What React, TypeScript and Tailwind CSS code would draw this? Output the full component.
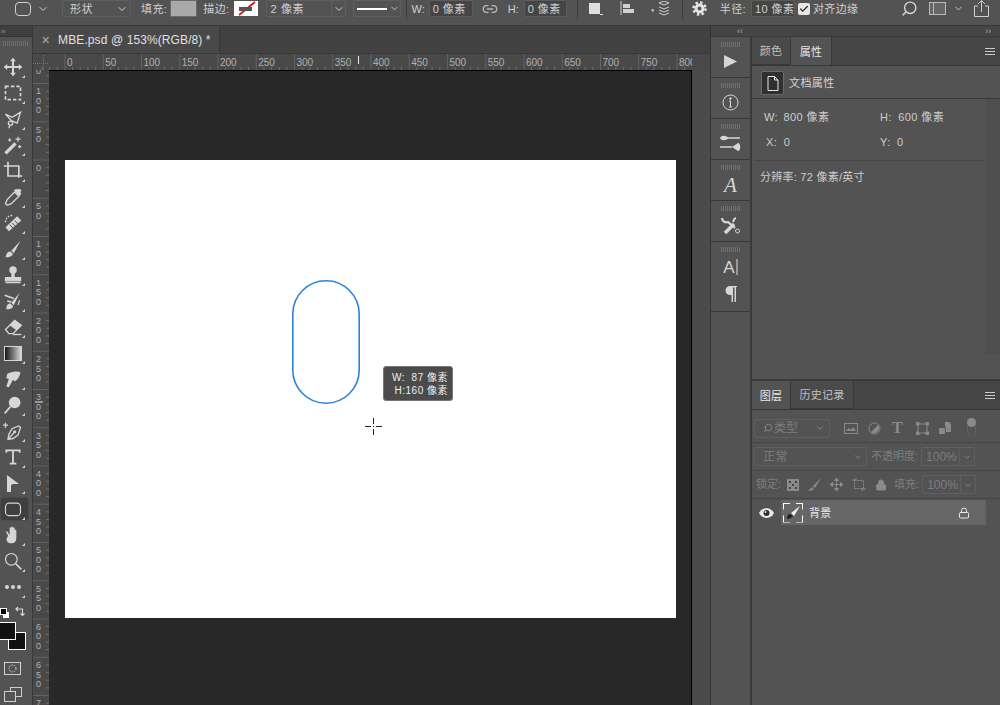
import type { ReactNode } from "react"
import { ChevronDown, Search, Link2, Lock, Check } from "lucide-react"

const C = "#d6d6d6"

function Ico({ children, size = 20, box = 24 }: { children: ReactNode; size?: number; box?: number }) {
  return (
    <svg width={size} height={size} viewBox={`0 0 ${box} ${box}`} fill="none" stroke={C} strokeWidth="1.6">
      {children}
    </svg>
  )
}

const tools: ReactNode[] = [
  <Ico key="move"><path d="M12 2v20M2 12h20" strokeWidth="2.4" /><path d="M12 1l3.5 4h-7zM12 23l3.5-4h-7zM1 12l4-3.5v7zM23 12l-4-3.5v7z" fill={C} stroke="none" /></Ico>,
  <Ico key="marquee"><rect x="3" y="4" width="18" height="16" strokeDasharray="4 2.5" strokeWidth="2" /></Ico>,
  <Ico key="lasso"><path d="M3 6l8 4 10-6-4 13-7-3z" /><circle cx="9" cy="17" r="2.5" /><path d="M8 20l-1 3" /></Ico>,
  <Ico key="wand"><path d="M3 22L15 10" strokeWidth="4" /><path d="M18 2v6M15 5h6M8 4v4M6 6h4M20 12v4M18 14h4" strokeWidth="1.4" /></Ico>,
  <Ico key="crop"><path d="M1 6h18v14M6 1v17h17" strokeWidth="2" /></Ico>,
  <Ico key="dropper"><path d="M14 6l5 5-9 9-5 2-2-2 2-5z" /><path d="M13 4l7 7 2-3-1-1 1-3-2-2-3 1-1-1z" fill={C} stroke="none" /></Ico>,
  <Ico key="heal"><path d="M7 22L22 9l-5-5L3 17z" fill={C} stroke="none" /><path d="M8 14l4 4M11 12l4 4M14 9l4 4" stroke="#535353" strokeWidth="1.2" /><path d="M3 11c0-5 4-8 8-8" strokeDasharray="2 1.5" /></Ico>,
  <Ico key="brush"><path d="M21 2L10 14l3 3z" fill={C} stroke="none" /><path d="M9 15c-4 0-5 3-6 7 4 0 8-1 9-4z" fill={C} stroke="none" /></Ico>,
  <Ico key="stamp"><circle cx="12" cy="6" r="4.5" fill={C} stroke="none" /><path d="M10 9h4v6h-4z" fill={C} stroke="none" /><path d="M3 15h18v4H3zM3 21h18" fill={C} stroke={C} strokeWidth="1.5" /></Ico>,
  <Ico key="mixer"><path d="M20 2L10 14l3 3z" fill={C} stroke="none" /><path d="M9 15c-4 0-5 3-5 7 4 0 8-1 8-4z" fill={C} stroke="none" /><path d="M2 5l11 4M5 12l5 1" strokeWidth="2" /><path d="M20 11l-2 6" strokeWidth="1.4" /></Ico>,
  <Ico key="eraser"><path d="M3 15L14 4l8 6-10 10H7z" /><path d="M14 4l8 6-6 6-8-6z" fill={C} stroke="none" /><path d="M12 21h10" /></Ico>,
  <svg key="grad" width="18" height="15" viewBox="0 0 18 15"><defs><linearGradient id="g"><stop offset="0" stopColor="#111" /><stop offset="1" stopColor="#ddd" /></linearGradient></defs><rect x="0.5" y="0.5" width="17" height="14" fill="url(#g)" stroke="#d6d6d6" /></svg>,
  <Ico key="smudge"><path d="M5 6c4-3 12-4 16-2-1 5-3 9-7 11l-2-2-5 9-3-1 3-9-3-1z" fill={C} stroke="none" /></Ico>,
  <Ico key="dodge"><circle cx="14" cy="9" r="7" fill={C} stroke="none" /><path d="M9 14l-7 8" strokeWidth="2" /></Ico>,
  <Ico key="pen"><path d="M11 9l8-3 2 2-3 9-6 4-6 1 1-6z" /><path d="M7 21l7-8" /><circle cx="14" cy="13" r="1" fill={C} /><path d="M3 2v6M0 5h6" /></Ico>,
  <Ico key="type"><path d="M4 7V4h16v3M12 4v16M8 20h8" strokeWidth="2.2" /></Ico>,
  <svg key="path" width="16" height="18" viewBox="0 0 16 18"><path d="M2 1l12 9H8l-2 1v7H2z" fill="#d6d6d6" /></svg>,
  <Ico key="rect"><rect x="3" y="5" width="18" height="15" rx="4.5" strokeWidth="1.4" /></Ico>,
  <Ico key="hand"><path d="M6 13L4 9c-1-2 1-2 2 0l2 3V4c0-1.6 2-1.6 2 0v6-7c0-1.6 2-1.6 2 0v7-6c0-1.6 2-1.6 2 0v7-4c0-1.6 2-1.6 2 0v8c0 5-2 7-6 7s-5-2-6-5z" fill={C} stroke="none" /></Ico>,
  <Ico key="zoom"><circle cx="10" cy="10" r="7" strokeWidth="1.4" /><path d="M15 15l7 7" strokeWidth="2" /></Ico>,
  <svg key="dots" width="16" height="4" viewBox="0 0 16 4"><circle cx="2" cy="2" r="2" fill="#d6d6d6" /><circle cx="8" cy="2" r="2" fill="#d6d6d6" /><circle cx="14" cy="2" r="2" fill="#d6d6d6" /></svg>,
]

function Toolbar() {
  return (
    <div className="w-[32px] shrink-0 flex flex-col bg-[#535353] relative overflow-hidden">
      <div className="h-[11px] shrink-0 bg-[#3f3f3f] border-b border-[#333] flex items-center pl-px">
        <span className="text-[7px] leading-none text-[#aaa]">››</span>
      </div>
      <div className="h-[5px] shrink-0 mt-[4px] mx-[3px] bg-[repeating-linear-gradient(90deg,#6d6d6d_0,#6d6d6d_1px,transparent_1px,transparent_2px)]"></div>
      <div className="h-[8px] shrink-0"></div>
      {tools.map((t, i) => (
        <div key={i} className="h-[26px] shrink-0 relative flex items-center justify-center">
          {i === 17 && <div className="absolute left-0 right-[3px] top-[1px] bottom-[1px] bg-[#3f3f3f] rounded-sm border border-[#4a4a4a]"></div>}
          <div className="relative -translate-x-[3px] flex items-center justify-center">{t}</div>
          <div className="absolute right-[7px] bottom-[2px] w-0 h-0 border-l-[3px] border-l-transparent border-b-[3px] border-b-[#d0d0d0]"></div>
        </div>
      ))}
      <div className="relative h-[55px] shrink-0">
        <div className="absolute left-[3px] top-[12px] w-[6px] h-[6px] bg-white"></div>
        <div className="absolute left-0 top-[8px] w-[7px] h-[7px] bg-black border border-white"></div>
        <div className="absolute left-[15px] top-[6px]">
          <svg width="11" height="11" viewBox="0 0 11 11" fill="none" stroke="#d6d6d6" strokeWidth="1.2"><path d="M1 3h6.5v6.5M3 1L1 3l2 2M5.5 7.5l2 2 2-2" /></svg>
        </div>
        <div className="absolute left-[8px] top-[32px] w-[18px] h-[18px] bg-[#111] border border-white"></div>
        <div className="absolute left-[-2px] top-[22px] w-[18px] h-[18px] bg-[#111] border border-white"></div>
      </div>
      <div className="h-[26px] shrink-0 flex items-center pl-[4px]">
        <svg width="17" height="13" viewBox="0 0 17 13"><rect x="0.5" y="0.5" width="16" height="12" fill="none" stroke="#d0d0d0" /><circle cx="8.5" cy="6.5" r="3.5" fill="none" stroke="#d0d0d0" strokeDasharray="1.5 1" /></svg>
      </div>
      <div className="h-[26px] shrink-0 flex items-center pl-[4px] relative">
        <svg width="18" height="15" viewBox="0 0 18 15" fill="none" stroke="#d0d0d0"><rect x="6.5" y="0.5" width="11" height="9" /><rect x="0.5" y="4.5" width="11" height="10" fill="#535353" /></svg>
      </div>
    </div>
  )
}

function HRuler() {
  const majors = Array.from({ length: 17 }, (_, i) => i)
  return (
    <svg width="660" height="16" viewBox="0 0 660 16" className="block">
      <rect width="660" height="16" fill="#494949" />
      {Array.from({ length: 90 }, (_, i) => {
        const x = 32 + 7.65 * (i - 3)
        const major = (i - 3) % 5 === 0
        return <line key={i} x1={x} x2={x} y1={major ? 0 : 13} y2={16} stroke={major ? "#626262" : "#6f6f6f"} />
      })}
      <path d="M0 9.500h15M10.500 1v15" stroke="#777" strokeDasharray="1 1" />
      {majors.map((i) => (
        <text key={i} x={34 + 38.25 * i} y={12} fontSize="10" fill="#b0b0b0" fontFamily="Liberation Sans">
          {i * 50}
        </text>
      ))}
      <line x1="325.5" x2="325.5" y1="2" y2="10" stroke="#e8e8e8" />
    </svg>
  )
}

function VRuler() {
  const vals = [100, 50, 0, 50, 100, 150, 200, 250, 300, 350, 400, 450, 500, 550, 600, 650, 700]
  return (
    <svg width="16" height="635" viewBox="0 0 16 635" className="block shrink-0">
      <rect width="16" height="635" fill="#494949" />
      {Array.from({ length: 90 }, (_, i) => {
        const y = 90 + 7.65 * (i - 15)
        const major = (i - 15) % 5 === 0
        return <line key={i} y1={y} y2={y} x1={major ? 0 : 13} x2={16} stroke={major ? "#626262" : "#6f6f6f"} />
      })}
      <text x="3" y="4" fontSize="9" fill="#b0b0b0" fontFamily="Liberation Sans">0</text>
      {vals.map((v, i) =>
        String(v).split("").map((d, j) => (
          <text key={`${i}${j}`} x="3" y={24.4 + 38.25 * i + j * 9.5} fontSize="9" fill="#b0b0b0" fontFamily="Liberation Sans">
            {d}
          </text>
        ))
      )}
      <line x1="2" x2="10" y1="332" y2="332" stroke="#e8e8e8" />
    </svg>
  )
}

function Canvas() {
  return (
    <div className="w-[643px] h-[635px] bg-[#282828] border-t border-r border-black shrink-0 pt-[89px] pl-[16px] overflow-hidden">
      <div className="relative w-[611px] h-[458px] bg-white">
        <svg width="68" height="124" viewBox="0 0 68 124" fill="none" className="absolute left-[227px] top-[120px]">
          <rect x="0.8" y="0.8" width="66.400" height="122.400" rx="33.200" stroke="#2c83d8" strokeWidth="1.600" />
        </svg>
        <div className="absolute left-[318px] top-[206px] w-[70px] h-[35px] bg-[#4b4b4b] rounded-[3px] border border-[#777] text-[10px] leading-[13px] text-[#eee] flex flex-col justify-center items-end pr-[4px]">
          <span className="tracking-[0.5px]">W:&nbsp; 87 像素</span>
          <span className="tracking-[0.5px]">H:160 像素</span>
        </div>
        <div className="absolute left-[300px] top-[258px]">
          <svg width="17" height="17" viewBox="0 0 17 17" stroke="#222"><path d="M8.5 0v6M8.5 11v6M0 8.5h6M11 8.5h6M8 8.5h1" /></svg>
        </div>
      </div>
    </div>
  )
}

function Label({ children, className = "" }: { children: ReactNode; className?: string }) {
  return <span className={`text-[11px] leading-none text-[#d0d0d0] whitespace-nowrap pt-px ${className}`}>{children}</span>
}

function OptionsBar() {
  const box = "h-[17px] border border-[#5f5f5f] rounded-[2px] flex items-center shrink-0"
  const field = "h-[17px] bg-[#454545] border border-[#5c5c5c] rounded-[1px] text-[11px] text-[#d0d0d0] flex items-center shrink-0 tracking-[0.4px] whitespace-nowrap overflow-hidden pt-px"
  return (
    <div className="h-[26px] border-b border-[#383838] bg-[#535353] flex items-start shrink-0 relative overflow-hidden">
      <div className="flex items-center h-[17px] pl-[15px]">
        <div className="w-[16px] h-[14px] rounded-[4px] border border-[#cfcfcf]"></div>
        <ChevronDown size={12} color="#cfcfcf" className="ml-[6px]" />
        <div className={`${box} w-[69px] ml-[13px] justify-between pl-[7px] pr-[2px]`}>
          <Label className="tracking-[0.5px]">形状</Label>
          <ChevronDown size={12} color="#cfcfcf" />
        </div>
        <Label className="ml-[10px] tracking-[0.4px]">填充:</Label>
        <div className="w-[27px] h-[17px] bg-[#a9a9a9] border border-[#6a6a6a] ml-[3px] shrink-0"></div>
        <Label className="ml-[6px] tracking-[0.4px]">描边:</Label>
        <div className="ml-[4px] w-[24px] h-[15px] bg-white shrink-0 flex items-center justify-center">
          <svg width="24" height="15" viewBox="0 0 24 15"><path d="M5 14L21 1" stroke="#d8141a" strokeWidth="1.8" /><rect x="5" y="6" width="13" height="4" fill="#555" /></svg>
        </div>
        <div className={`${box} w-[80px] ml-[8px]`}>
          <div className="w-[66px] pl-[4px] text-[11px] text-[#d0d0d0] tracking-[0.6px] border-r border-[#5f5f5f] h-full flex items-center pt-px">2 像素</div>
          <ChevronDown size={12} color="#cfcfcf" className="ml-px" />
        </div>
        <div className={`${box} w-[48px] ml-[7px] pl-[3px]`}>
          <div className="w-[30px] h-[2px] bg-white"></div>
          <ChevronDown size={11} color="#cfcfcf" className="ml-[2px]" />
        </div>
        <div className="w-px h-[20px] bg-[#3c3c3c] ml-[5px] shrink-0"></div>
        <Label className="ml-[5px] text-[#b5b5b5]">W:</Label>
        <div className={`${field} w-[44px] ml-[4px] pl-[3px]`}>0 像素</div>
        <Link2 size={16} color="#b8b8b8" className="ml-[9px] shrink-0" />
        <Label className="ml-[10px] text-[#b5b5b5]">H:</Label>
        <div className={`${field} w-[43px] ml-[5px] pl-[3px]`}>0 像素</div>
        <div className="w-px h-[20px] bg-[#3c3c3c] ml-[10px] shrink-0"></div>
        <div className="relative ml-[11px] w-[11px] h-[11px] bg-[#e0e0e0] shrink-0">
          <div className="absolute left-[11px] top-[11px] w-[3px] h-px bg-[#ddd]"></div>
        </div>
        <svg width="16" height="15" viewBox="0 0 16 15" className="ml-[20px] shrink-0">
          <path d="M1 0v14" stroke="#d0d0d0" /><rect x="3" y="3" width="7" height="4" fill="#d0d0d0" /><rect x="3" y="8" width="11" height="4" fill="#d0d0d0" />
        </svg>
        <svg width="20" height="16" viewBox="0 0 20 16" fill="none" stroke="#d0d0d0" className="ml-[14px] shrink-0">
          <path d="M1 9h3M3 8v3" /><path d="M9 2l5-2 5 2-5 2zM9 6l5 2 5-2M9 9l5 2 5-2M9 12l5 2 5-2" />
        </svg>
        <div className="w-px h-[20px] bg-[#3c3c3c] ml-[12px] shrink-0"></div>
        <svg width="15" height="15" viewBox="0 0 15 15" fill="none" stroke="#e4e4e4" className="ml-[9px] shrink-0">
          <circle cx="7.500" cy="7.500" r="3.500" strokeWidth="3" />
          <circle cx="7.500" cy="7.500" r="6" strokeWidth="2.600" strokeDasharray="2.400 2.300" />
        </svg>
        <Label className="ml-[13px] text-[#c0c0c0] tracking-[0.4px]">半径:</Label>
        <div className={`${field} w-[44px] ml-[5px] pl-[3px]`}>10 像素</div>
        <div className="ml-[3px] w-[12px] h-[12px] bg-[#e6e6e6] rounded-[2px] flex items-center justify-center shrink-0">
          <Check size={10} color="#222" strokeWidth={3} />
        </div>
        <Label className="ml-[3px] tracking-[0.3px]">对齐边缘</Label>
        <Search size={17} color="#d6d6d6" className="ml-[43px] shrink-0 -scale-x-100" />
        <div className="ml-[11px] w-[17px] h-[13px] border border-[#bbb] bg-[#666] shrink-0 flex">
          <div className="w-[4px] border-r border-[#bbb]"></div>
        </div>
        <ChevronDown size={11} color="#cfcfcf" className="ml-[7px] shrink-0" />
        <svg width="17" height="18" viewBox="0 0 17 18" fill="none" stroke="#d0d0d0" className="ml-[9px] shrink-0">
          <path d="M5 6H1.5v10.5h14V6H12M8.5 12V1M5 4l3.5-3.5L12 4" />
        </svg>
      </div>
    </div>
  )
}

function Handle() {
  return <div className="h-[5px] shrink-0 w-[20px] mx-auto mt-[5px] bg-[repeating-linear-gradient(90deg,#6f6f6f_0,#6f6f6f_1px,transparent_1px,transparent_2px)]"></div>
}

function Dock() {
  const block = "border-b border-[#383838] shrink-0 flex flex-col"
  return (
    <div className="w-[39px] bg-[#535353] flex flex-col shrink-0">
      <div className={`${block} h-[41px]`}>
        <Handle />
        <div className="flex-1 flex items-center justify-center pb-[1px]"><svg width="15" height="15" viewBox="0 0 15 15"><path d="M1 1l13 6.5L1 14z" fill="#d6d6d6" /></svg></div>
      </div>
      <div className={`${block} h-[41px]`}>
        <Handle />
        <div className="flex-1 flex items-center justify-center pb-[2px]">
          <svg width="17" height="17" viewBox="0 0 17 17" fill="none" stroke="#d6d6d6"><circle cx="8.5" cy="8.5" r="7.5" /><path d="M8.5 7v6M7 13h3M7 7h2" /><circle cx="8.5" cy="4.5" r="0.8" fill="#d6d6d6" /></svg>
        </div>
      </div>
      <div className={`${block} h-[41px]`}>
        <Handle />
        <div className="flex-1 flex items-center justify-center pb-[2px]">
          <svg width="21" height="16" viewBox="0 0 21 16"><path d="M6 3h14M0 12h12" stroke="#d6d6d6" strokeWidth="1.5" /><path d="M0 3c1-3 7-3 8 0-1 3-7 3-8 0zM12 12l6-4c3 0 3 8 0 8z" fill="#d6d6d6" /></svg>
        </div>
      </div>
      <div className={`${block} h-[41px]`}>
        <Handle />
        <div className="flex-1 flex items-center justify-center text-[21px] leading-none italic text-[#d6d6d6] font-['Liberation_Serif',serif]">A</div>
      </div>
      <div className={`${block} h-[41px]`}>
        <Handle />
        <div className="flex-1 flex items-center justify-center">
          <svg width="20" height="18" viewBox="0 0 20 18" fill="none" stroke="#d6d6d6"><path d="M1 1c0 3 3 5 6 4l7 6" strokeWidth="2.2" /><path d="M12 5c1-2 0-3 3-4" strokeWidth="2" /><circle cx="16.5" cy="14" r="2" /><path d="M13 7l-9 9" strokeWidth="3.5" /></svg>
        </div>
      </div>
      <div className={`${block} h-[70px]`}>
        <Handle />
        <div className="flex items-center justify-center mt-[3px] h-[24px]">
          <span className="text-[17px] leading-none text-[#d6d6d6]">A</span><span className="w-[2px] h-[16px] bg-[#999] ml-px"></span>
        </div>
        <div className="flex items-center justify-center mt-[7px]">
          <svg width="13" height="16" viewBox="0 0 13 16"><path d="M6 0h7v1H12v15h-1.500V1.500H9V16H7.500V9H6A4.500 4.500 0 0 1 6 0z" fill="#d6d6d6" /></svg>
        </div>
      </div>
    </div>
  )
}

function Tab({ children, active, w }: { children: ReactNode; active?: boolean; w: string }) {
  return (
    <div className={`${w} h-full flex items-center justify-center pt-[2px] text-[11px] tracking-[0.3px] border-r border-[#383838] ${active ? "bg-[#535353] text-[#e8e8e8]" : "bg-[#4a4a4a] text-[#c0c0c0] border-b"}`}>
      {children}
    </div>
  )
}

function MenuIcon() {
  return <div className="ml-auto mr-[5px] w-[10px] h-[7px] border-y border-[#ccc] relative"><div className="absolute top-[2px] inset-x-0 h-px bg-[#ccc]"></div></div>
}

function Properties() {
  return (
    <div className="h-[344px] flex flex-col bg-[#535353] border-b-[2px] border-[#3a3a3a] shrink-0">
      <div className="h-[29px] flex items-center bg-[#454545] border-b border-[#383838] shrink-0">
        <Tab w="w-[39px]">颜色</Tab>
        <Tab w="w-[41px]" active>属性</Tab>
        <MenuIcon />
      </div>
      <div className="h-[33px] border-b border-[#3a3a3a] flex items-center pl-[9px] pt-[2px] shrink-0 text-[11px] text-[#d6d6d6]">
        <div className="w-[23px] h-[24px] bg-[#2f2f2f] border border-[#6a6a6a] rounded-[2px] flex items-center justify-center">
          <svg width="12" height="15" viewBox="0 0 12 15" fill="none" stroke="#e6e6e6"><path d="M1 .5h6.500L11 4v10.500H1zM7.500 .5V4H11" /></svg>
        </div>
        <span className="ml-[5px] tracking-[0.4px]">文档属性</span>
      </div>
      <div className="flex flex-1 min-h-0">
        <div className="w-[234px] shrink-0 flex flex-col text-[11px] text-[#cdcdcd]">
          <div className="flex pt-[11px] h-[36px] leading-[14px]">
            <span className="w-[117px] pl-[12px] tracking-[0.4px]">W: <span className="ml-[2px]">800 像素</span></span>
            <span className="pl-[11px] tracking-[0.4px]">H: <span className="ml-[3px]">600 像素</span></span>
          </div>
          <div className="flex h-[25px] leading-[14px]">
            <span className="w-[117px] pl-[14px] tracking-[0.4px]">X: <span className="ml-[3px]">0</span></span>
            <span className="pl-[11px] tracking-[0.4px]">Y: <span className="ml-[3px]">0</span></span>
          </div>
          <div className="mx-[3px] border-t border-[#474747]"></div>
          <div className="pl-[8px] mt-[9px] leading-[14px] tracking-[0.25px]">分辨率: 72 像素/英寸</div>
        </div>
        <div className="w-[14px] ml-auto h-[255px] bg-[#4e4e4e]"></div>
      </div>
    </div>
  )
}

function Layers() {
  const sel = "h-[19px] border border-[#5f5f5f] rounded-[2px] flex items-center text-[12px] text-[#7d7d7d] shrink-0"
  const fade = "#8a8a8a"
  const line = <div className="border-t border-[#454545] shrink-0"></div>
  return (
    <div className="flex-1 flex flex-col bg-[#535353] min-h-0">
      <div className="h-[29px] flex items-center bg-[#454545] border-b border-[#383838] shrink-0">
        <Tab w="w-[39px]" active>图层</Tab>
        <Tab w="w-[63px]">历史记录</Tab>
        <MenuIcon />
      </div>
      <div className="h-[32px] flex items-center pl-[2px] pt-[4px] shrink-0">
        <div className={`${sel} w-[76px] pl-[8px]`}>
          <Search size={10} color={fade} className="-scale-x-100" />
          <span className="ml-px">类型</span>
          <ChevronDown size={10} color={fade} className="ml-auto mr-[4px]" />
        </div>
        <svg width="14" height="11" viewBox="0 0 14 11" fill="none" stroke={fade} className="ml-[14px]"><rect x="0.5" y="0.5" width="13" height="10" /><path d="M2 8l3-3 2 2 2-3 3 4z" fill={fade} stroke="none" /></svg>
        <svg width="13" height="13" viewBox="0 0 13 13" className="ml-[10px]"><circle cx="6.500" cy="6.500" r="5.500" fill="none" stroke={fade} /><path d="M10 3L3 10a5 5 0 0 0 7-7z" fill={fade} /></svg>
        <span className="ml-[11px] text-[16px] leading-none font-bold text-[#8a8a8a] font-['Liberation_Serif',serif]">T</span>
        <svg width="13" height="13" viewBox="0 0 13 13" fill="none" stroke={fade} className="ml-[13px]"><rect x="2" y="2" width="9" height="9" /><path d="M0 0h3v3H0zM10 0h3v3h-3zM0 10h3v3H0zM10 10h3v3h-3z" fill={fade} /></svg>
        <svg width="12" height="12" viewBox="0 0 12 12" className="ml-[10px]"><path d="M6 0h4l2 2v8H7V5H6zM0 6h6v6H0z" fill={fade} /></svg>
        <div className="ml-[16px] relative w-[9px] h-[18px] rounded-full border border-[#606060]">
          <div className="absolute -top-[2px] -left-[1px] w-[9px] h-[9px] rounded-full bg-[#8a8a8a]"></div>
        </div>
      </div>
      {line}
      <div className="h-[27px] flex items-center pl-[2px] shrink-0">
        <div className={`${sel} w-[113px] pl-[8px] tracking-[0.4px]`}>
          <span>正常</span>
          <ChevronDown size={10} color={fade} className="ml-auto mr-[3px]" />
        </div>
        <span className="ml-[4px] text-[11px] text-[#7d7d7d]">不透明度:</span>
        <div className={`${sel} w-[54px] ml-[3px] pl-[4px] text-[11px]`}>
          100%
          <div className="ml-auto w-[15px] h-full border-l border-[#5f5f5f] flex items-center justify-center"><ChevronDown size={10} color={fade} /></div>
        </div>
      </div>
      {line}
      <div className="h-[27px] flex items-center pl-[4px] shrink-0">
        <span className="text-[11px] text-[#7d7d7d]">锁定:</span>
        <svg width="12" height="12" viewBox="0 0 12 12" className="ml-[6px]"><rect width="12" height="12" fill="#8a8a8a" /><path d="M2 2h2v2H2zM8 2h2v2H8zM5 5h2v2H5zM2 8h2v2H2zM8 8h2v2H8z" fill="#444" /></svg>
        <svg width="13" height="13" viewBox="0 0 13 13" className="ml-[9px]"><path d="M13 0L5 8l2 2zM4 9l-4 4c3 0 5-1 6-2z" fill={fade} /></svg>
        <svg width="13" height="13" viewBox="0 0 13 13" fill="none" stroke={fade} className="ml-[9px]"><path d="M6.500 0v13M0 6.500h13" /><path d="M6.500 0l2 2.500h-4zM6.500 13l2-2.500h-4zM0 6.500l2.500-2v4zM13 6.500l-2.500-2v4z" fill={fade} /></svg>
        <svg width="14" height="13" viewBox="0 0 14 13" fill="none" stroke={fade} className="ml-[9px]"><rect x="2.500" y="2.500" width="9" height="8" strokeDasharray="2 1" /><path d="M0 2h4V0M10 13v-2h4" /></svg>
        <Lock size={12} color={fade} fill={fade} className="ml-[9px]" />
        <span className="ml-[7px] text-[11px] text-[#7d7d7d]">填充:</span>
        <div className={`${sel} w-[54px] ml-[3px] pl-[4px] text-[11px]`}>
          100%
          <div className="ml-auto w-[15px] h-full border-l border-[#5f5f5f] flex items-center justify-center"><ChevronDown size={10} color={fade} /></div>
        </div>
      </div>
      {line}
      <div className="flex mt-[1px] h-[25px] shrink-0">
        <div className="w-[29px] flex items-center justify-center">
          <svg width="15" height="10" viewBox="0 0 15 10"><path d="M0 5c3-6.500 12-6.500 15 0-3 6.500-12 6.500-15 0z" fill="#ececec" /><circle cx="7.500" cy="5" r="3" fill="#2e2e2e" /><circle cx="6.500" cy="4" r="1" fill="#ececec" /></svg>
        </div>
        <div className="w-[205px] bg-[#666666] flex items-center pl-[2px]">
          <div className="w-[20px] h-[20px] relative flex items-center justify-center">
            <div className="absolute inset-0 border-[1.5px] border-white [clip-path:polygon(0_0,35%_0,35%_100%,65%_100%,65%_0,100%_0,100%_35%,0_35%,0_65%,100%_65%,100%_100%,0_100%)]"></div>
            <svg width="15" height="15" viewBox="0 0 15 15"><path d="M14 1L5 8l3 3z" fill="#f0f0f0" /><path d="M4 9c-2 0-3 2-3 5 2 0 5-1 6-3z" fill="#222" /></svg>
          </div>
          <span className="ml-[6px] pt-[1px] text-[11px] text-[#ececec] tracking-[0.3px]">背景</span>
          <Lock size={12} color="#e8e8e8" className="ml-auto mr-[16px]" />
        </div>
      </div>
    </div>
  )
}

function RightPanels() {
  return (
    <div className="flex-1 flex flex-col min-w-0 bg-[#535353] border-l-2 border-[#3a3a3a]">
      <Properties />
      <Layers />
    </div>
  )
}

export default function App() {
  return (
    <div className="w-[1000px] h-[705px] overflow-hidden flex flex-col bg-[#535353] font-['Liberation_Sans','Noto_Sans_CJK_SC',sans-serif]">
      <OptionsBar />
      <div className="flex-1 flex min-h-0">
        <Toolbar />
        <div className="w-px bg-[#383838] shrink-0"></div>
        {/* document area */}
        <div className="w-[659px] shrink-0 flex flex-col overflow-hidden bg-[#424242]">
          <div className="h-[28px] flex shrink-0 bg-[#414141] border-b border-[#383838]">
            <div className="w-[187px] bg-[#494949] border-r border-[#383838] flex items-center pt-px text-[12px] text-[#e0e0e0] tracking-[0.1px]">
              <span className="ml-[8px] mr-[8px] text-[11px] text-[#aaa]">✕</span>
              MBE.psd @ 153%(RGB/8) *
            </div>
          </div>
          <HRuler />
          <div className="flex min-h-0">
            <VRuler />
            <Canvas />
          </div>
        </div>
        {/* scrollbar gutter */}
        <div className="w-[18px] shrink-0 flex flex-col bg-[#4a4a4a]">
          <div className="h-[28px] bg-[#414141] border-b border-[#383838]"></div>
          <div className="h-[16px] bg-[#494949]"></div>
        </div>
        <div className="w-px bg-[#333] shrink-0"></div>
        <div className="flex-1 flex flex-col min-w-0">
          <div className="h-[11px] bg-[#454545] border-b border-[#383838] shrink-0 flex items-center justify-between pl-[26px] pr-[9px] text-[9px] leading-none text-[#aaa]">
            <span>‹‹</span>
            <span>››</span>
          </div>
          <div className="flex-1 flex min-h-0">
            <Dock />
            <RightPanels />
          </div>
        </div>
      </div>
    </div>
  )
}
